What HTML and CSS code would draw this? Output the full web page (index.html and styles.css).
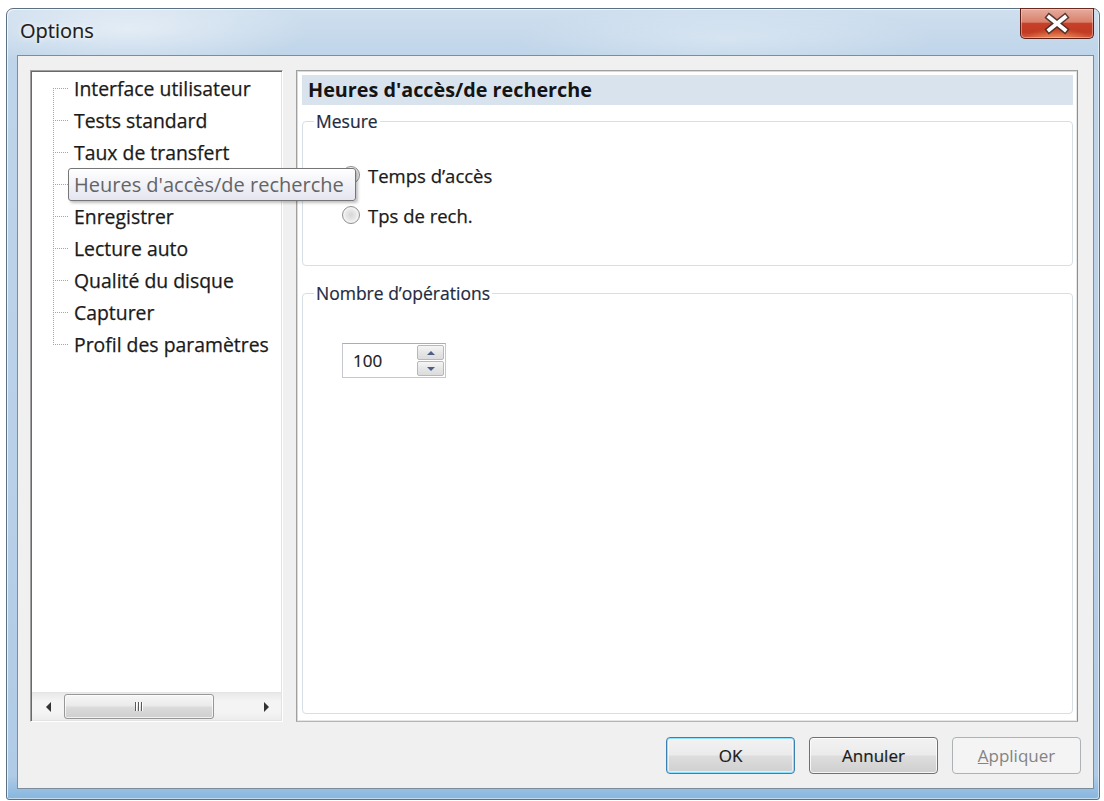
FILE: index.html
```html
<!DOCTYPE html>
<html lang="fr">
<head>
<meta charset="utf-8">
<title>Options</title>
<link rel="stylesheet" href="styles.css">
</head>
<body>
<div class="window">
  <div class="titlebar">
    <span class="title">Options</span>
    <div class="close">
      <svg width="74" height="31" viewBox="0 0 74 31">
        <path d="M29 9 L45 22 M45 9 L29 22" stroke="#3d2a28" stroke-width="7" stroke-linecap="square" fill="none" opacity="0.85"/>
        <path d="M29 9 L45 22 M45 9 L29 22" stroke="#ffffff" stroke-width="4" stroke-linecap="square" fill="none"/>
      </svg>
    </div>
  </div>
  <div class="client">
    <div class="panes">
      <div class="tree">
        <ul class="tree-list">
          <li class="first"><span class="conn"></span><span class="label">Interface utilisateur</span></li>
          <li><span class="conn"></span><span class="label">Tests standard</span></li>
          <li><span class="conn"></span><span class="label">Taux de transfert</span></li>
          <li class="hovered"><span class="conn"></span><span class="label">Heures d'accès/de recherche</span></li>
          <li><span class="conn"></span><span class="label">Enregistrer</span></li>
          <li><span class="conn"></span><span class="label">Lecture auto</span></li>
          <li><span class="conn"></span><span class="label">Qualité du disque</span></li>
          <li><span class="conn"></span><span class="label">Capturer</span></li>
          <li class="last"><span class="conn"></span><span class="label">Profil des paramètres</span></li>
        </ul>
        <div class="hscroll">
          <span class="arrow arrow-left"></span>
          <div class="track">
            <div class="thumb"><span class="grip"></span></div>
          </div>
          <span class="arrow arrow-right"></span>
        </div>
      </div>
      <div class="page">
        <div class="page-header">Heures d'accès/de recherche</div>
        <fieldset class="group group-mesure">
          <legend>Mesure</legend>
          <div class="radios">
            <div class="radio-row"><span class="radio"></span><span>Temps d’accès</span></div>
            <div class="radio-row"><span class="radio"></span><span>Tps de rech.</span></div>
          </div>
        </fieldset>
        <fieldset class="group group-ops">
          <legend>Nombre d’opérations</legend>
          <div class="spinner">
            <span class="spin-value">100</span>
            <div class="spin-buttons">
              <span class="spin-btn"><span class="tri-up"></span></span>
              <span class="spin-btn"><span class="tri-down"></span></span>
            </div>
          </div>
        </fieldset>
      </div>
    </div>
    <div class="buttons">
      <button class="btn btn-default">OK</button>
      <button class="btn">Annuler</button>
      <button class="btn btn-disabled"><u>A</u>ppliquer</button>
    </div>
  </div>
  <div class="tooltip">Heures d'accès/de recherche</div>
</div>
</body>
</html>
```

FILE: styles.css
```css
html, body {
  margin: 0;
  padding: 0;
  background: #ffffff;
}

body {
  font-family: "Open Sans", "Noto Sans", "DejaVu Sans", sans-serif;
  color: #1a1a1a;
  width: 1104px;
  height: 801px;
  overflow: hidden;
}

.window {
  position: relative;
  margin: 8px 4px 0 6px;
  height: 792px;
  box-sizing: border-box;
  border: 1px solid #5d7083;
  border-radius: 7px 7px 3px 3px;
  padding: 0 5px 10px 10px;
  display: flex;
  flex-direction: column;
  background:
    radial-gradient(ellipse 260px 60px at 120px 20px, rgba(255,255,255,0.5), rgba(255,255,255,0) 70%),
    radial-gradient(ellipse 300px 50px at 720px 30px, rgba(255,255,255,0.3), rgba(255,255,255,0) 70%),
    linear-gradient(to bottom, #cfdfee 0, #bed4e9 50px, #b8d0e8 60%, #b0cbe6 97%, #86b6de 100%);
  box-shadow: inset 1px 1px 0 rgba(255,255,255,0.7), inset -1px -1px 0 rgba(255,255,255,0.5);
}

.titlebar {
  height: 46px;
  display: flex;
  align-items: flex-start;
  flex: none;
}

.title {
  padding-top: 8px;
  margin-left: 3px;
  font-size: 20px;
  line-height: 28px;
  color: #1c1c1c;
  -webkit-text-stroke: 0.2px #1c1c1c;
  text-shadow: 0 0 6px rgba(255,255,255,0.95), 0 0 2px rgba(255,255,255,0.9);
}

.close {
  margin-left: auto;
  margin-top: -1px;
  width: 74px;
  height: 31px;
  box-sizing: border-box;
  border: 1px solid #5a1f16;
  border-top-color: #6b2a20;
  border-radius: 0 0 5px 5px;
  background:
    radial-gradient(ellipse 40px 12px at 50% 100%, rgba(255,190,120,0.55), rgba(255,190,120,0) 80%),
    linear-gradient(to bottom, #e6ab9c 0, #d9826d 45%, #c6402a 50%, #c23a22 80%, #d25a3c 100%);
  box-shadow: inset 0 0 0 1px rgba(255,220,210,0.45);
  display: flex;
  align-items: center;
  justify-content: center;
}

.close svg {
  display: block;
}

.client {
  flex: 1;
  box-sizing: border-box;
  border: 1px solid #7c8d9e;
  background: #f0f0f0;
  padding: 14px 12px 14px 12px;
  display: flex;
  flex-direction: column;
  min-height: 0;
}

.panes {
  flex: 1;
  display: flex;
  gap: 13px;
  margin-right: 3px;
  min-height: 0;
}

/* Tree */
.tree {
  width: 253px;
  flex: none;
  box-sizing: border-box;
  background: #ffffff;
  border: 1px solid;
  border-color: #a0a0a0 #ffffff #ffffff #a0a0a0;
  box-shadow: inset 1px 1px 0 #696969, inset -1px -1px 0 #e3e3e3;
  display: flex;
  flex-direction: column;
  padding: 1px;
}

.tree-list {
  flex: 1;
  list-style: none;
  margin: 0;
  padding: 0 0 0 21px;
}

.tree-list li {
  display: flex;
  height: 32px;
  align-items: center;
  font-size: 19.4px;
  white-space: nowrap;
}

.conn {
  width: 21px;
  align-self: stretch;
  flex: none;
  background:
    repeating-linear-gradient(to bottom, #a5a5a5 0 1px, transparent 1px 2px) 0 0 / 1px 100% no-repeat,
    repeating-linear-gradient(to right, #a5a5a5 0 1px, transparent 1px 2px) 0 16px / 16px 1px no-repeat;
}

.tree-list li.first .conn {
  background:
    repeating-linear-gradient(to bottom, #a5a5a5 0 1px, transparent 1px 2px) 0 16px / 1px 16px no-repeat,
    repeating-linear-gradient(to right, #a5a5a5 0 1px, transparent 1px 2px) 0 16px / 16px 1px no-repeat;
}

.tree-list li.last .conn {
  background:
    repeating-linear-gradient(to bottom, #a5a5a5 0 1px, transparent 1px 2px) 0 0 / 1px 17px no-repeat,
    repeating-linear-gradient(to right, #a5a5a5 0 1px, transparent 1px 2px) 0 16px / 16px 1px no-repeat;
}

.label {
  color: #1a1a1a;
  -webkit-text-stroke: 0.25px #1a1a1a;
}

.hovered .label {
  visibility: hidden;
}

.hscroll {
  height: 27px;
  flex: none;
  display: flex;
  align-items: center;
  background: linear-gradient(to bottom, #e9e9e9 0, #f4f4f4 30%, #f4f4f4 70%, #ececec 100%);
  border-top: 1px solid #e4e4e4;
}

.arrow {
  width: 0;
  height: 0;
  flex: none;
  border-top: 5px solid transparent;
  border-bottom: 5px solid transparent;
}

.arrow-left {
  margin-left: 14px;
  border-right: 5px solid #333333;
}

.arrow-right {
  margin-right: 12px;
  border-left: 5px solid #333333;
}

.track {
  flex: 1;
  height: 100%;
  padding: 1px 50px 1px 13px;
  box-sizing: border-box;
  display: flex;
}

.thumb {
  flex: 1;
  box-sizing: border-box;
  border: 1px solid #979797;
  border-radius: 3px;
  background: linear-gradient(to bottom, #f6f6f6 0, #ebebeb 45%, #dadada 55%, #cfcfcf 100%);
  box-shadow: inset 0 0 0 1px rgba(255,255,255,0.7);
  display: flex;
  align-items: center;
  justify-content: center;
}

.grip {
  width: 9px;
  height: 9px;
  background: repeating-linear-gradient(to right, #5a5a5a 0 1px, #ffffff 1px 2px, transparent 2px 3px);
}

/* Page */
.page {
  flex: 1;
  box-sizing: border-box;
  background: #ffffff;
  border: 1px solid;
  border-color: #a0a0a0 #8f8f8f #b5b5b5 #a0a0a0;
  box-shadow: inset 1px 1px 0 #d9d9d9, inset -1px -1px 0 #e6e6e6;
  padding: 4px 4px 7px 5px;
  display: flex;
  flex-direction: column;
}

.page-header {
  height: 30px;
  flex: none;
  background: #d9e3ed;
  font-weight: 700;
  font-size: 19.8px;
  line-height: 30px;
  padding-left: 6px;
  color: #141414;
  white-space: nowrap;
}

.group {
  margin: 0;
  border: 1px solid #d5dfe5;
  border-radius: 4px;
  padding: 0 11px;
  min-width: 0;
  box-shadow: inset 1px 1px 0 #ffffff;
}

.group legend {
  font-size: 17.5px;
  line-height: 22px;
  padding: 0 2px;
  color: #1e2b40;
  -webkit-text-stroke: 0.2px #1e2b40;
}

.group-mesure {
  margin-top: 5px;
  height: 156px;
  box-sizing: border-box;
}

.radios {
  margin-left: 28px;
  padding-top: 30px;
  display: flex;
  flex-direction: column;
  gap: 14px;
}

.radio-row {
  display: flex;
  align-items: center;
  height: 26px;
  font-size: 18.5px;
  gap: 8px;
  -webkit-text-stroke: 0.25px #1a1a1a;
}

.radio {
  width: 18px;
  height: 18px;
  box-sizing: border-box;
  border-radius: 50%;
  border: 1px solid #8e8f8f;
  background: radial-gradient(circle at 50% 50%, #d6d6d6 0, #e8e8e8 45%, #f6f6f6 70%, #ffffff 100%);
  box-shadow: inset 0 0 0 1px #f2f2f2;
  flex: none;
}

.group-ops {
  margin-top: 16px;
  flex: 1;
}

.spinner {
  margin-left: 28px;
  margin-top: 39px;
  width: 104px;
  height: 35px;
  box-sizing: border-box;
  border: 1px solid #c4c8ce;
  border-top-color: #abadb3;
  background: #ffffff;
  display: flex;
}

.spin-value {
  flex: 1;
  font-size: 17px;
  line-height: 33px;
  padding-left: 10px;
  -webkit-text-stroke: 0.2px #1a1a1a;
}

.spin-buttons {
  width: 27px;
  display: flex;
  flex-direction: column;
  padding: 1px 1px 1px 0;
  gap: 1px;
}

.spin-btn {
  flex: 1;
  box-sizing: border-box;
  border: 1px solid #b4b9c0;
  border-radius: 2px;
  background: linear-gradient(to bottom, #f6f6f6 0, #e6e6e6 50%, #dcdcdc 100%);
  display: flex;
  align-items: center;
  justify-content: center;
}

.tri-up {
  width: 0;
  height: 0;
  border-left: 4px solid transparent;
  border-right: 4px solid transparent;
  border-bottom: 4px solid #4b5f85;
}

.tri-down {
  width: 0;
  height: 0;
  border-left: 4px solid transparent;
  border-right: 4px solid transparent;
  border-top: 4px solid #4b5f85;
}

/* Buttons */
.buttons {
  flex: none;
  margin-top: 15px;
  height: 37px;
  display: flex;
  justify-content: flex-end;
  gap: 14px;
}

.btn {
  width: 129px;
  height: 37px;
  box-sizing: border-box;
  border: 1px solid #707070;
  border-radius: 4px;
  background: linear-gradient(to bottom, #f2f2f2 0, #ebebeb 48%, #dddddd 52%, #cfcfcf 100%);
  box-shadow: inset 0 0 0 1px rgba(255,255,255,0.8);
  font-family: "Open Sans", "Noto Sans", sans-serif;
  font-size: 17px;
  color: #1a1a1a;
  -webkit-text-stroke: 0.2px currentColor;
  padding: 0;
  cursor: default;
}

.btn-default {
  border-color: #3c7fb1;
  box-shadow: inset 0 0 0 1px #8ee0ff, inset 0 0 0 2px rgba(255,255,255,0.6);
}

.btn-disabled {
  border-color: #adb2b5;
  background: #f4f4f4;
  color: #838383;
  box-shadow: none;
  -webkit-text-stroke: 0;
}

.btn-disabled u {
  text-decoration: underline;
}

/* Tooltip */
.tooltip {
  position: absolute;
  left: 61px;
  top: 159px;
  width: 288px;
  height: 33px;
  box-sizing: border-box;
  padding: 0 5px;
  border: 1px solid #767676;
  border-radius: 3px;
  background: linear-gradient(to bottom, #ffffff 0, #e4e5f0 100%);
  box-shadow: 2px 2px 3px rgba(0,0,0,0.25);
  font-size: 20px;
  line-height: 31px;
  color: #646464;
  white-space: nowrap;
  z-index: 5;
}
```
